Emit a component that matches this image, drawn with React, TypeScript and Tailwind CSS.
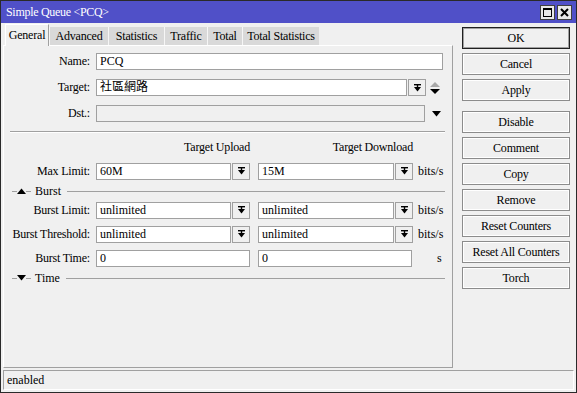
import React from 'react';

const FONT = "'Liberation Serif', 'Noto Sans CJK TC', serif";

function DropBtn() {
  return (
    <div className="ml-[1px] w-[18px] h-[17px] border border-[#a0a0a0] bg-[#f0f0f0] flex items-center justify-center shrink-0">
      <svg width="7" height="8" viewBox="0 0 7 8">
        <rect x="0" y="0" width="7" height="1.4" fill="#000" />
        <rect x="2.8" y="1" width="1.4" height="2" fill="#000" />
        <polygon points="0,3 7,3 3.5,7.5" fill="#000" />
      </svg>
    </div>
  );
}

function Field({ w, value, disabled }: { w: string; value?: string; disabled?: boolean }) {
  return (
    <div
      className={`${w} h-[17px] border border-[#a0a0a0] ${disabled ? 'bg-[#f0f0f0]' : 'bg-white'} pl-[3px] leading-[15px] text-[12px] shrink-0 overflow-hidden whitespace-nowrap`}
    >
      {value}
    </div>
  );
}

function Label({ text }: { text: string }) {
  return <div className="w-[87px] text-right pr-[1px] shrink-0 text-[12px] leading-[17px] tracking-[-0.2px] whitespace-nowrap">{text}</div>;
}

function Section({ title, open }: { title: string; open: boolean }) {
  return (
    <div className="flex items-center h-[14px] ml-[8px] mr-[7px]">
      <div className="w-[5px] h-px bg-[#a0a0a0]" />
      <svg width="9" height="6" viewBox="0 0 9 6" className="shrink-0">
        {open ? <polygon points="0,6 9,6 4.5,0.5" fill="#000" /> : <polygon points="0,0 9,0 4.5,5.5" fill="#000" />}
      </svg>
      <div className="w-[5px] h-px bg-[#a0a0a0]" />
      <span className="ml-[4px] text-[12px] leading-[14px]">{title}</span>
      <div className="flex-1 ml-[6px] h-px bg-[#a0a0a0]" />
    </div>
  );
}

function Btn({ label, def }: { label: string; def?: boolean }) {
  return (
    <div
      className={`h-[22px] w-[108px] flex items-center justify-center text-[12px] tracking-[-0.2px] bg-[#f0f0f0] border ${def ? 'border-[#202020]' : 'border-[#8c8c8c]'}`}
    >
      <div className={`w-full h-full flex items-center justify-center ${def ? 'border border-[#a0a0a0]' : 'border border-white'}`}>{label}</div>
    </div>
  );
}

const tabs = ['Advanced', 'Statistics', 'Traffic', 'Total', 'Total Statistics'];
const tabW = ['w-[59px]', 'w-[56px]', 'w-[43px]', 'w-[35px]', 'w-[77px]'];

export default function App() {
  return (
    <div className="w-[577px] h-[393px] bg-[#f0f0f0] border border-[#2a2a2a] flex flex-col text-black overflow-hidden" style={{ fontFamily: FONT }}>
      {/* title bar */}
      <div className="h-[22px] bg-[#5050c8] flex items-center pl-[5px] pr-[4px] shrink-0">
        <span className="text-white text-[12px] tracking-[-0.3px]">Simple Queue &lt;PCQ&gt;</span>
        <div className="ml-auto flex gap-[2px]">
          <div className="w-[15px] h-[15px] bg-[#e8e8e8] border border-[#404040] flex items-center justify-center">
            <svg width="9" height="9" viewBox="0 0 9 9">
              <rect x="0.5" y="0.5" width="8" height="8" fill="none" stroke="#000" />
              <rect x="0" y="0" width="9" height="2" fill="#000" />
            </svg>
          </div>
          <div className="w-[15px] h-[15px] bg-[#e8e8e8] border border-[#404040] flex items-center justify-center">
            <svg width="9" height="9" viewBox="0 0 9 9">
              <path d="M1 1L8 8M8 1L1 8" stroke="#000" strokeWidth="2" />
            </svg>
          </div>
        </div>
      </div>

      <div className="flex flex-1">
        {/* left: tabs + panel */}
        <div className="ml-[2px] flex flex-col">
          <div className="flex items-end h-[22px] pl-[2px] text-[12px] tracking-[-0.2px]">
            <div className="relative z-10 w-[44px] h-[22px] mb-[-1px] bg-[#f0f0f0] border-t border-l border-white border-r border-r-[#a0a0a0] flex items-center justify-center pb-[2px]">
              General
            </div>
            {tabs.map((t, i) => (
              <div key={t} className={`${tabW[i]} h-[18px] bg-[#d9d9d9] border-l border-[#f6f6f6] flex items-center justify-center whitespace-nowrap`}>
                {t}
              </div>
            ))}
          </div>
          <div className="w-[450px] h-[323px] border border-t-white border-l-white border-r-[#a0a0a0] border-b-[#a0a0a0] flex flex-col">
            <div className="flex items-center mt-[7px]">
              <Label text="Name:" />
              <div className="ml-[5px]"><Field w="w-[347px]" value="PCQ" /></div>
            </div>
            <div className="flex items-center mt-[9px]">
              <Label text="Target:" />
              <div className="ml-[5px] flex items-center">
                <Field w="w-[311px]" value="社區網路" />
                <DropBtn />
                <svg width="10" height="12" viewBox="0 0 10 12" className="ml-[4px]">
                  <polygon points="0,5 10,5 5,0" fill="#a8a8a8" />
                  <polygon points="0,7 10,7 5,12" fill="#000" />
                </svg>
              </div>
            </div>
            <div className="flex items-center mt-[9px]">
              <Label text="Dst.:" />
              <div className="ml-[5px] flex items-center">
                <Field w="w-[329px]" disabled />
                <svg width="9" height="6" viewBox="0 0 9 6" className="ml-[7px]">
                  <polygon points="0,0 9,0 4.5,5.5" fill="#000" />
                </svg>
              </div>
            </div>
            <div className="mt-[9px] ml-[6px] mr-[7px] h-[2px] border-t border-[#a0a0a0] border-b border-b-white" />

            <div className="flex mt-[7px] h-[14px] text-[12px] leading-[14px] tracking-[-0.2px]">
              <div className="w-[92px]" />
              <div className="w-[154px] text-right">Target Upload</div>
              <div className="ml-[8px] w-[155px] text-right">Target Download</div>
            </div>

            <div className="flex items-center mt-[8px]">
              <Label text="Max Limit:" />
              <div className="ml-[5px] flex items-center">
                <Field w="w-[135px]" value="60M" />
                <DropBtn />
                <div className="ml-[8px]"><Field w="w-[136px]" value="15M" /></div>
                <DropBtn />
                <span className="ml-[5px] text-[12px]">bits/s</span>
              </div>
            </div>

            <div className="mt-[4px]"><Section title="Burst" open /></div>

            <div className="flex items-center mt-[3px]">
              <Label text="Burst Limit:" />
              <div className="ml-[5px] flex items-center">
                <Field w="w-[135px]" value="unlimited" />
                <DropBtn />
                <div className="ml-[8px]"><Field w="w-[136px]" value="unlimited" /></div>
                <DropBtn />
                <span className="ml-[5px] text-[12px]">bits/s</span>
              </div>
            </div>
            <div className="flex items-center mt-[6px]">
              <Label text="Burst Threshold:" />
              <div className="ml-[5px] flex items-center">
                <Field w="w-[135px]" value="unlimited" />
                <DropBtn />
                <div className="ml-[8px]"><Field w="w-[136px]" value="unlimited" /></div>
                <DropBtn />
                <span className="ml-[5px] text-[12px]">bits/s</span>
              </div>
            </div>
            <div className="flex items-center mt-[6px]">
              <Label text="Burst Time:" />
              <div className="ml-[5px] flex items-center">
                <Field w="w-[154px]" value="0" />
                <div className="ml-[8px]"><Field w="w-[154px]" value="0" /></div>
                <span className="ml-[25px] text-[12px]">s</span>
              </div>
            </div>

            <div className="mt-[4px]"><Section title="Time" open={false} /></div>
          </div>
        </div>

        {/* right: buttons */}
        <div className="ml-[9px] mt-[4px] flex flex-col gap-[4px]">
          <Btn label="OK" def />
          <Btn label="Cancel" />
          <Btn label="Apply" />
          <div className="mt-[6px] flex flex-col gap-[4px]">
            <Btn label="Disable" />
            <Btn label="Comment" />
            <Btn label="Copy" />
            <Btn label="Remove" />
            <Btn label="Reset Counters" />
            <Btn label="Reset All Counters" />
            <Btn label="Torch" />
          </div>
        </div>
      </div>

      <div className="mx-[2px] mt-[2px] mb-[2px] h-[20px] border-t border-l border-[#a0a0a0] border-b border-r border-b-white border-r-white flex items-center pl-[3px] text-[12px] shrink-0">
        enabled
      </div>
    </div>
  );
}
